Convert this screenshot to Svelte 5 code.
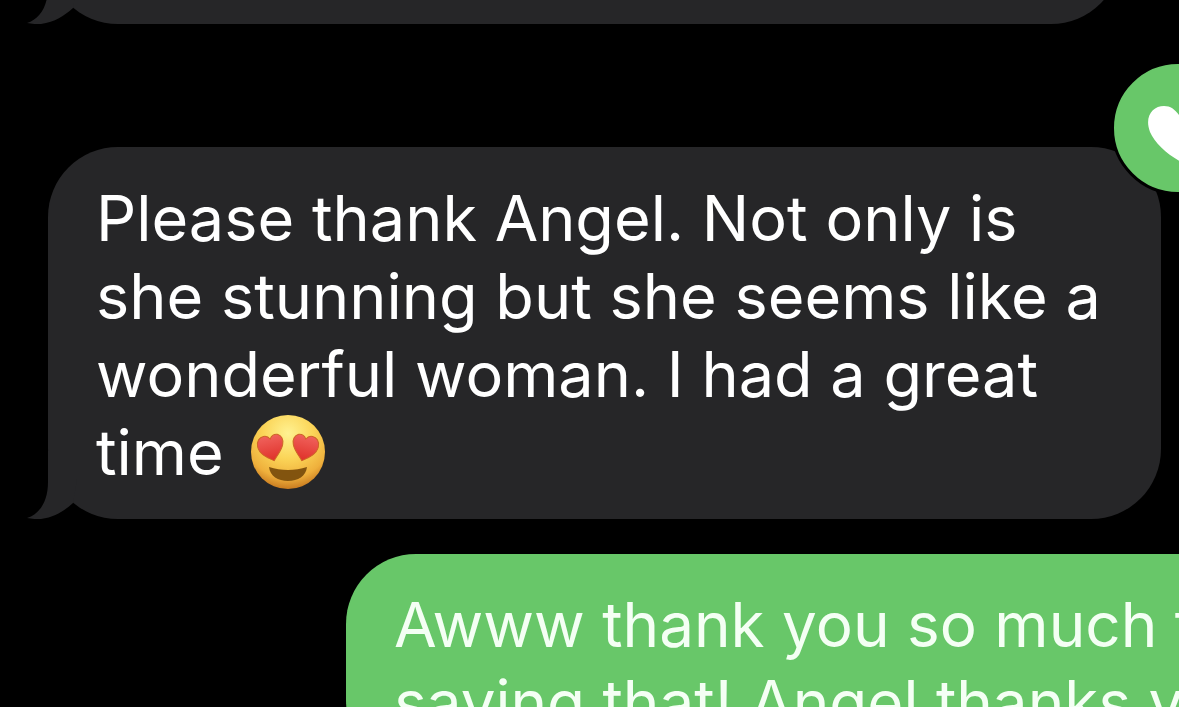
<script>
  const messages = [
    { from: 'them', text: '', cut: true },
    { from: 'them', text: 'Please thank Angel. Not only is she stunning but she seems like a wonderful woman. I had a great time', emoji: true, loved: true },
    { from: 'me', text: 'Awww thank you so much for saying that! Angel thanks you' }
  ]
</script>

<main class="thread">
  {#each messages as message}
    <article class="bubble {message.from}" class:cut={message.cut}>
      {#if message.text}
        <p>
          {message.text}
          {#if message.emoji}
            <svg class="emoji" viewBox="0 0 76 76" role="img" aria-label="Smiling face with heart eyes">
              <defs>
                <radialGradient id="face" cx="50%" cy="25%" r="75%">
                  <stop offset="0" stop-color="#fff292" />
                  <stop offset="0.45" stop-color="#fbd558" />
                  <stop offset="0.8" stop-color="#efb03c" />
                  <stop offset="1" stop-color="#c97b20" />
                </radialGradient>
                <linearGradient id="heart" x1="0" y1="0" x2="0" y2="1">
                  <stop offset="0" stop-color="#f0625c" />
                  <stop offset="1" stop-color="#df3029" />
                </linearGradient>
                <path id="eye" d="M0 14C-7 9-13 4-13-3C-13-9-9-12-5-12C-2-12 0-10 1-8C3-11 6-12 9-11C13-9 14-4 12 0C10 5 5 9 0 14Z" />
              </defs>
              <circle cx="38" cy="38" r="37" fill="url(#face)" />
              <use href="#eye" transform="translate(21 33) rotate(-13)" fill="url(#heart)" stroke="#ce6527" />
              <use href="#eye" transform="translate(55 33) rotate(13) scale(-1 1)" fill="url(#heart)" stroke="#ce6527" />
              <path d="M19 53C31 57 45 57 57 53C56 62 48 67 38 67C28 67 20 62 19 53Z" fill="#82540f" />
            </svg>
          {/if}
        </p>
      {/if}
      {#if message.from === 'them'}
        <svg class="tail" viewBox="0 0 50 69" aria-hidden="true">
          <path d="M21 0V32C21 51 13 64 0 68C5 69 10 69 14 69C28 67 37 61 46 53L50 30Z" />
        </svg>
      {/if}
      {#if message.loved}
        <span class="reaction" role="img" aria-label="Loved">
          <svg viewBox="0 0 72 58" aria-hidden="true">
            <path d="M38 58C23 52 7 38 2 26C-4 10 5 0 16 0C24 0 29 5 34 14C42 5 50 1 58 3C69 6 74 16 71 27C67 41 52 52 38 58Z" />
          </svg>
        </span>
      {/if}
    </article>
  {/each}
</main>

<style>
  :global(body) {
    margin: 0;
    background: #000;
  }

  .thread {
    box-sizing: border-box;
    display: flex;
    flex-direction: column;
    height: 100vh;
    padding: 0 18px 0 48px;
    overflow: hidden;
    background: #000;
    color: #fff;
    font-family: Inter, 'Liberation Sans', sans-serif;
    font-size: 63px;
    line-height: 78px;
  }

  .bubble {
    position: relative;
    flex: none;
    padding: 32px 48px 28px;
    border-radius: 70px;
  }

  .them {
    margin-bottom: 35px;
    background: #262628;
  }

  /* end of the message above, scrolled mostly out of view */
  .cut {
    height: 88px;
    margin: -124px 40px 123px 0;
  }

  .me {
    margin-left: 298px;
    margin-right: -180px;
    background: #68c769;
    color: #f4fff4;
    font-size: 62px;
  }

  p {
    margin: 0;
  }

  .emoji {
    width: 76px;
    height: 76px;
    margin: -8px 0 -8px 8px;
    vertical-align: -7px;
  }

  .tail {
    position: absolute;
    left: -21px;
    bottom: 0;
    width: 50px;
    height: 69px;
    fill: #262628;
  }

  .reaction {
    position: absolute;
    top: -86px;
    right: -84px;
    display: flex;
    align-items: center;
    justify-content: center;
    width: 128px;
    height: 128px;
    border: 3px solid #000;
    border-radius: 50%;
    background: #68c769;
  }

  .reaction svg {
    width: 72px;
    margin-left: 12px;
    margin-top: 14px;
    fill: #fff;
  }
</style>
